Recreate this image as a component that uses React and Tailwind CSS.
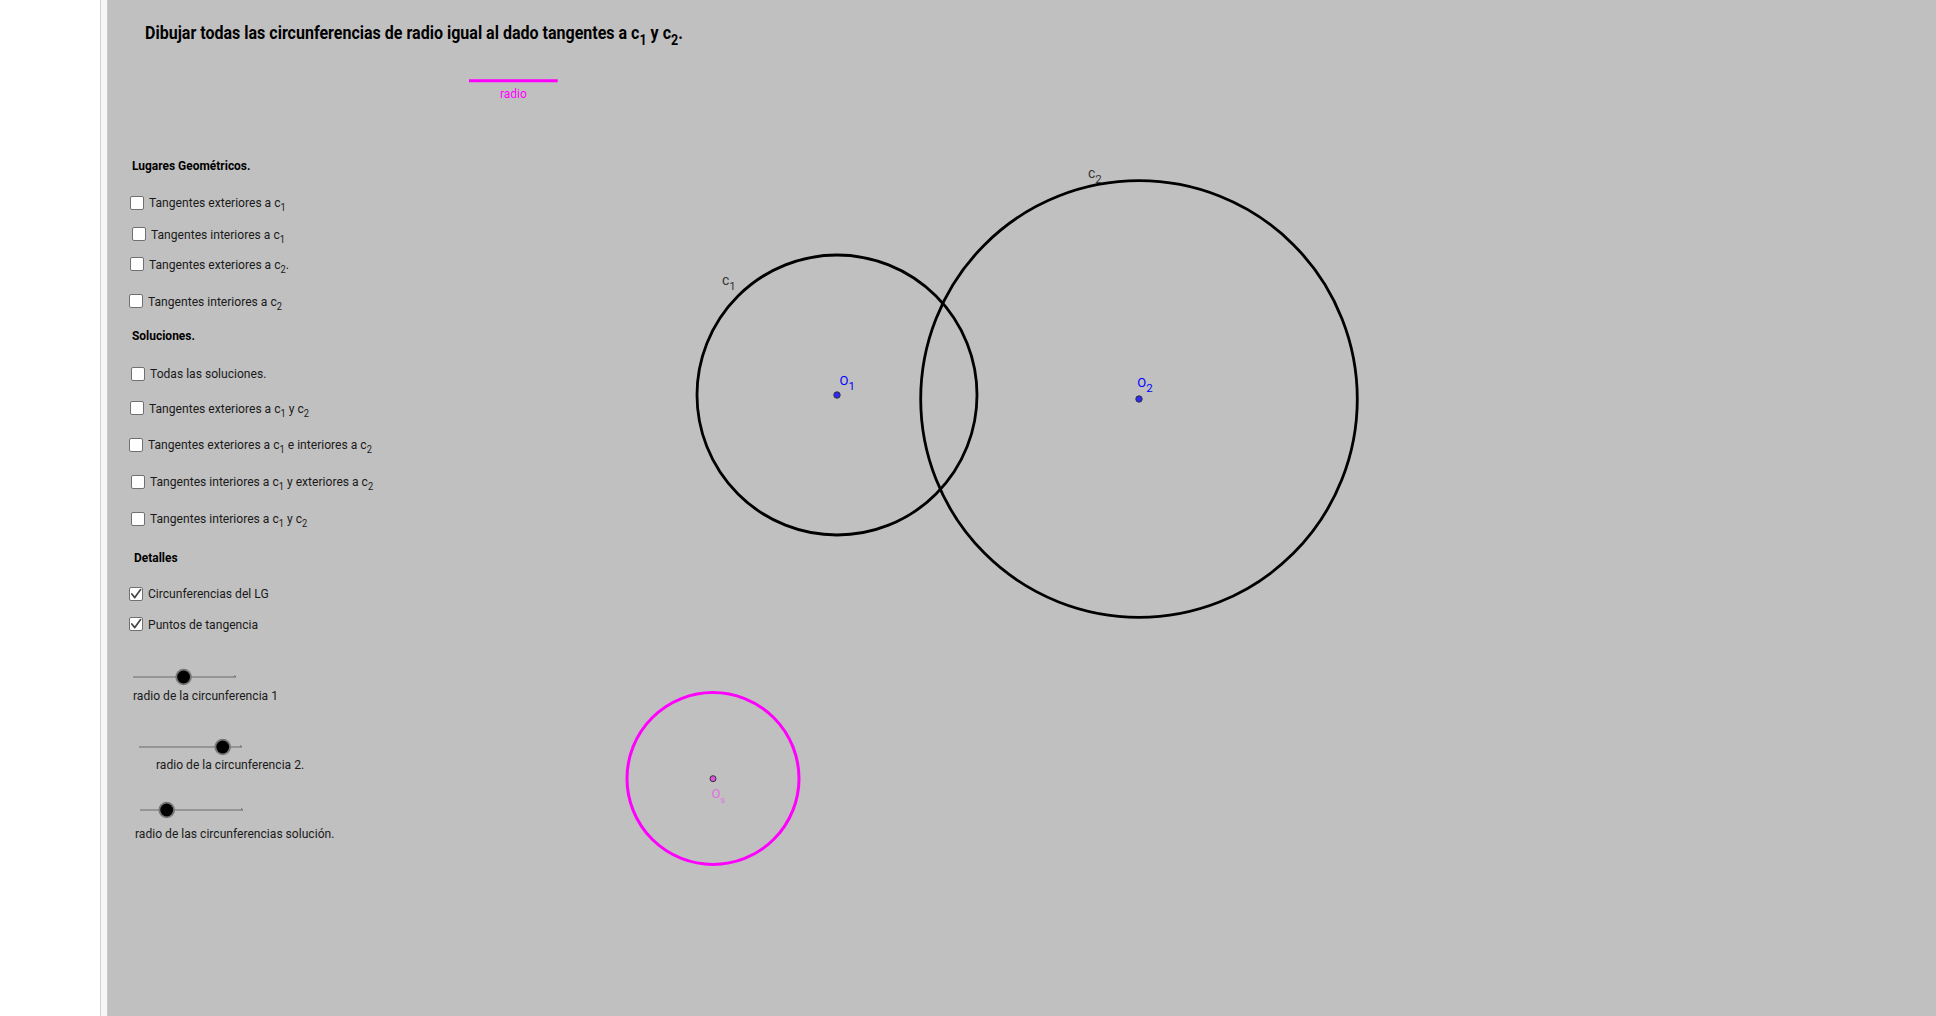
import React from "react";

const Sub = ({ children, small }) => (
  <span className={small ? "text-[10px] align-[-4px]" : "text-[14px] align-[-6px]"}>{children}</span>
);

const CheckRow = ({ ml, mt, checked, children }) => (
  <div className="flex h-4 items-start gap-[5px]" style={{ marginLeft: ml, marginTop: mt }}>
    <span className="mt-px flex h-[14px] w-[14px] shrink-0 items-center justify-center rounded-[2px] border-[1.5px] border-[#707070] bg-white">
      {checked && (
        <svg width="12" height="12" viewBox="0 0 12 12">
          <path d="M1.8 6 L4.8 9.6 L10.6 1.6" fill="none" stroke="#444" strokeWidth="1.7" strokeLinecap="round" strokeLinejoin="round" />
        </svg>
      )}
    </span>
    <span className="mt-[0.5px] origin-left scale-x-[0.93] whitespace-nowrap text-[13px] leading-4 text-[#1a1a1a]">{children}</span>
  </div>
);

const Heading = ({ ml, mt, children }) => (
  <div
    className="h-4 origin-left scale-x-[0.92] whitespace-nowrap text-[13px] font-bold leading-4 text-black"
    style={{ marginLeft: ml, marginTop: mt }}
  >
    {children}
  </div>
);

const Slider = ({ ml, mt, knob, labelMl, labelMt, children }) => (
  <div style={{ marginTop: mt }}>
    <div className="relative h-5 w-[104px]" style={{ marginLeft: ml }}>
      <svg width="112" height="20" viewBox="0 0 112 20" className="absolute left-0 top-0 overflow-visible">
        <line x1="0" y1="10" x2="103" y2="10" stroke="#6a6a6a" strokeWidth="1" />
        <line x1="101" y1="8.5" x2="103" y2="10" stroke="#6a6a6a" strokeWidth="1" />
        <circle cx={knob} cy="10" r="8.3" fill="#777" />
        <circle cx={knob} cy="10" r="6.4" fill="#000" />
      </svg>
    </div>
    <div
      className="h-4 origin-left scale-x-[0.93] whitespace-nowrap text-[13px] leading-4 text-[#1a1a1a]"
      style={{ marginLeft: labelMl, marginTop: labelMt }}
    >
      {children}
    </div>
  </div>
);

const Canvas = () => (
  <svg
    className="pointer-events-none absolute inset-0"
    width="1828"
    height="1016"
    viewBox="108 0 1828 1016"
    fontFamily="Roboto, sans-serif"
  >
    {/* segmento radio */}
    <line x1="469" y1="80.7" x2="557.7" y2="80.7" stroke="#ff00ff" strokeWidth="3" />
    <text x="500" y="98.3" fontSize="13" fill="#ff00ff" transform="translate(500 0) scale(0.92 1) translate(-500 0)">radio</text>

    {/* c1 y c2 */}
    <circle cx="837" cy="395" r="140" fill="none" stroke="#000" strokeWidth="2.8" />
    <circle cx="1139" cy="399" r="218.3" fill="none" stroke="#000" strokeWidth="2.8" />

    <text x="722" y="285" fontSize="14" fill="#333">
      c<tspan fontSize="11.5" dy="5">1</tspan>
    </text>
    <text x="1088" y="178" fontSize="14" fill="#333">
      c<tspan fontSize="11.5" dy="5">2</tspan>
    </text>

    {/* centros */}
    <circle cx="837" cy="395" r="3.2" fill="#2a2aff" stroke="#333" strokeWidth="1" />
    <text x="839.5" y="385" fontSize="13" fill="#0000ff">
      O<tspan fontSize="11.5" dy="5">1</tspan>
    </text>
    <circle cx="1139" cy="399" r="3.2" fill="#2a2aff" stroke="#333" strokeWidth="1" />
    <text x="1137.3" y="387.3" fontSize="13" fill="#0000ff">
      O<tspan fontSize="11.5" dy="4.5">2</tspan>
    </text>

    {/* circunferencia solución */}
    <circle cx="713" cy="778.5" r="86" fill="none" stroke="#ff00ff" strokeWidth="3" />
    <circle cx="713" cy="778.7" r="3" fill="#e050e0" stroke="#333" strokeWidth="1" />
    <text x="711.5" y="798.3" fontSize="13" fill="#e070e0">
      O<tspan fontSize="9" dy="4.5">s</tspan>
    </text>
  </svg>
);

export default function App() {
  return (
    <div className="flex h-[1016px] w-[1936px] overflow-hidden font-['Roboto',sans-serif]">
      <div className="w-[101px] shrink-0 border-r border-[#d2d2d2] bg-white" />
      <div className="w-[7px] shrink-0 border-r border-[#c9c9c9] bg-[#f7f7f7]" />
      <div className="relative flex-1 bg-[#c0c0c0]">
        <Canvas />
        <div className="relative flex flex-col">
          <h1 className="ml-[37px] mt-[21px] h-6 origin-left scale-x-[0.89] whitespace-nowrap text-[18px] font-bold leading-6 text-black">
            Dibujar todas las circunferencias de radio igual al dado tangentes a c<Sub>1</Sub> y c<Sub>2</Sub>.
          </h1>

          <Heading ml={24} mt={113}>Lugares Geométricos.</Heading>
          <CheckRow ml={22} mt={20.5}>Tangentes exteriores a c<Sub small>1</Sub></CheckRow>
          <CheckRow ml={24} mt={15.5}>Tangentes interiores a c<Sub small>1</Sub></CheckRow>
          <CheckRow ml={22} mt={14}>Tangentes exteriores a c<Sub small>2</Sub>.</CheckRow>
          <CheckRow ml={21} mt={21}>Tangentes interiores a c<Sub small>2</Sub></CheckRow>

          <Heading ml={24} mt={19}>Soluciones.</Heading>
          <CheckRow ml={23} mt={21.5}>Todas las soluciones.</CheckRow>
          <CheckRow ml={22} mt={18.5}>Tangentes exteriores a c<Sub small>1</Sub> y c<Sub small>2</Sub></CheckRow>
          <CheckRow ml={21} mt={20.7}>Tangentes exteriores a c<Sub small>1</Sub> e interiores a c<Sub small>2</Sub></CheckRow>
          <CheckRow ml={23} mt={21}>Tangentes interiores a c<Sub small>1</Sub> y exteriores a c<Sub small>2</Sub></CheckRow>
          <CheckRow ml={23} mt={21}>Tangentes interiores a c<Sub small>1</Sub> y c<Sub small>2</Sub></CheckRow>

          <Heading ml={26} mt={23}>Detalles</Heading>
          <CheckRow ml={21} mt={20} checked>Circunferencias del LG</CheckRow>
          <CheckRow ml={21} mt={14.5} checked>Puntos de tangencia</CheckRow>

          <Slider ml={25} mt={35} knob={50.6} labelMl={25} labelMt={1}>radio de la circunferencia 1</Slider>
          <Slider ml={31} mt={33} knob={83.7} labelMl={48} labelMt={0}>radio de la circunferencia 2.</Slider>
          <Slider ml={32} mt={27} knob={26.7} labelMl={27} labelMt={5.5}>radio de las circunferencias solución.</Slider>
        </div>
      </div>
    </div>
  );
}
